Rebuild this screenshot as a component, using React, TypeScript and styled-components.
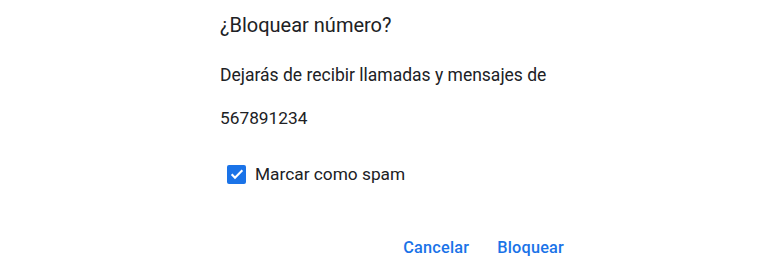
import React from "react";
import styled, { createGlobalStyle } from "styled-components";

const Global = createGlobalStyle`
  html, body { margin: 0; padding: 0; background: #ffffff; }
  body { font-family: Roboto, "Noto Sans", Arial, sans-serif; color: #202124; }
`;

const Page = styled.div`
  width: 772px;
  height: 263px;
  display: flex;
  justify-content: center;
  overflow: hidden;
`;

const Dialog = styled.div`
  width: 384px;
  box-sizing: border-box;
  padding: 13px 14px 0 26px;
  display: flex;
  flex-direction: column;
`;

const Title = styled.h2`
  margin: 0;
  font-size: 20px;
  line-height: 24px;
  font-weight: 400;
  color: #202124;
`;

const Body = styled.p`
  margin: 26px 0 0 0;
  font-size: 17.5px;
  line-height: 24px;
  color: #202124;
`;

const Number = styled.p`
  margin: 19px 0 0 0;
  font-size: 17.3px;
  line-height: 24px;
  color: #202124;
`;

const CheckRow = styled.label`
  margin: 32px 0 0 7px;
  display: flex;
  align-items: center;
  gap: 9px;
  font-size: 17.3px;
  line-height: 24px;
  color: #202124;
`;

const Box = styled.span`
  width: 19px;
  height: 19px;
  border-radius: 2px;
  background: #1a73e8;
  display: flex;
  align-items: center;
  justify-content: center;
`;

const Actions = styled.div`
  margin-top: 50px;
  display: flex;
  justify-content: flex-end;
  gap: 28px;
`;

const TextButton = styled.button`
  border: none;
  background: none;
  padding: 0;
  font-family: Roboto, Arial, sans-serif;
  font-size: 16.3px;
  font-weight: 500;
  letter-spacing: 0.2px;
  line-height: 24px;
  color: #1a73e8;
  cursor: pointer;
`;

export default function App() {
  return (
    <Page>
      <Global />
      <Dialog>
        <Title>¿Bloquear número?</Title>
        <Body>Dejarás de recibir llamadas y mensajes de</Body>
        <Number>567891234</Number>
        <CheckRow>
          <Box>
            <svg width="16" height="16" viewBox="0 0 24 24">
              <path d="M4 12.5l5 5L20 6.5" fill="none" stroke="#fff" strokeWidth="3.2" />
            </svg>
          </Box>
          Marcar como spam
        </CheckRow>
        <Actions>
          <TextButton>Cancelar</TextButton>
          <TextButton>Bloquear</TextButton>
        </Actions>
      </Dialog>
    </Page>
  );
}
